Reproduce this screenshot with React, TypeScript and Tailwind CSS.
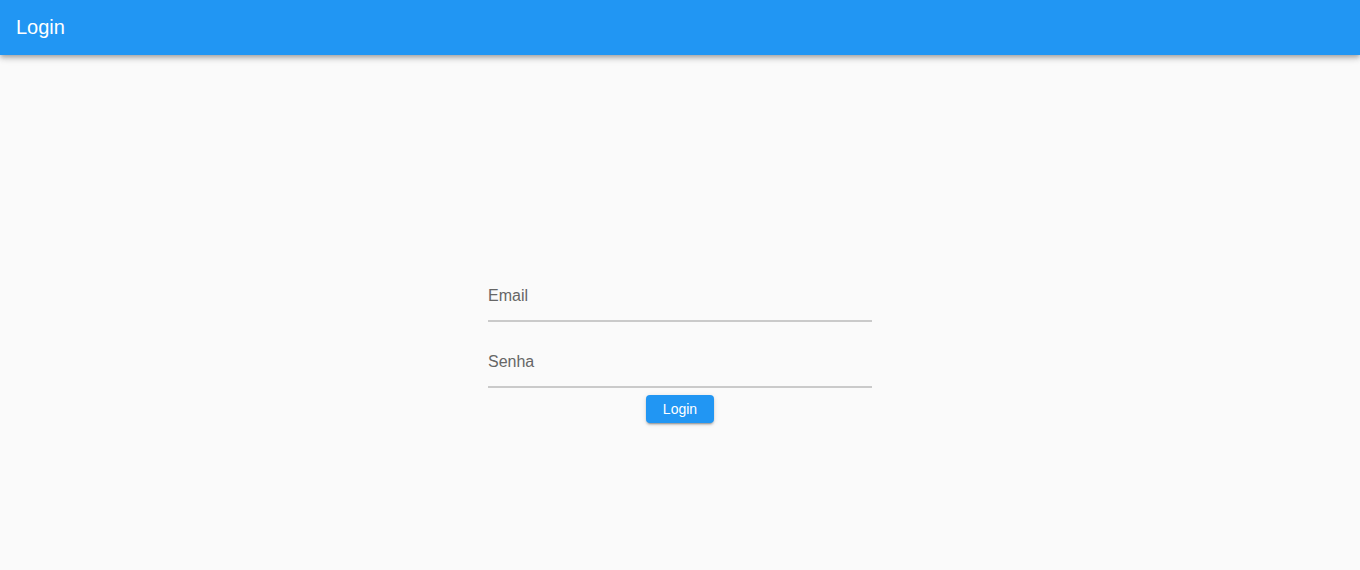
export default function App() {
  return (
    <div className="min-h-[570px] bg-[#fafafa] font-['Liberation_Sans',Arial,sans-serif]">
      <header className="relative z-10 flex h-[55px] items-center bg-[#2196f3] px-4 pb-[2px] shadow-[0_2px_4px_-1px_rgba(0,0,0,0.2),0_4px_5px_0_rgba(0,0,0,0.14),0_1px_10px_0_rgba(0,0,0,0.12)]">
        <h1 className="text-[20px] leading-none text-white">Login</h1>
      </header>
      <main className="flex justify-center pt-[201px]">
        <form className="flex w-[384px] flex-col items-center" onSubmit={(e) => e.preventDefault()}>
          <div className="flex h-[66px] w-full items-end border-b-2 border-[#cacaca]">
            <label className="pb-[12px] text-[16px] leading-6 text-[#666666]">Email</label>
          </div>
          <div className="flex h-[66px] w-full items-end border-b-2 border-[#cacaca]">
            <label className="pb-[12px] text-[16px] leading-6 text-[#666666]">Senha</label>
          </div>
          <button
            type="submit"
            className="mt-[7px] h-[28px] w-[68px] rounded-[4px] bg-[#2196f3] text-[14px] text-white shadow-[0_3px_1px_-2px_rgba(0,0,0,0.2),0_2px_2px_0_rgba(0,0,0,0.14),0_1px_5px_0_rgba(0,0,0,0.12)]"
          >
            Login
          </button>
        </form>
      </main>
    </div>
  )
}
